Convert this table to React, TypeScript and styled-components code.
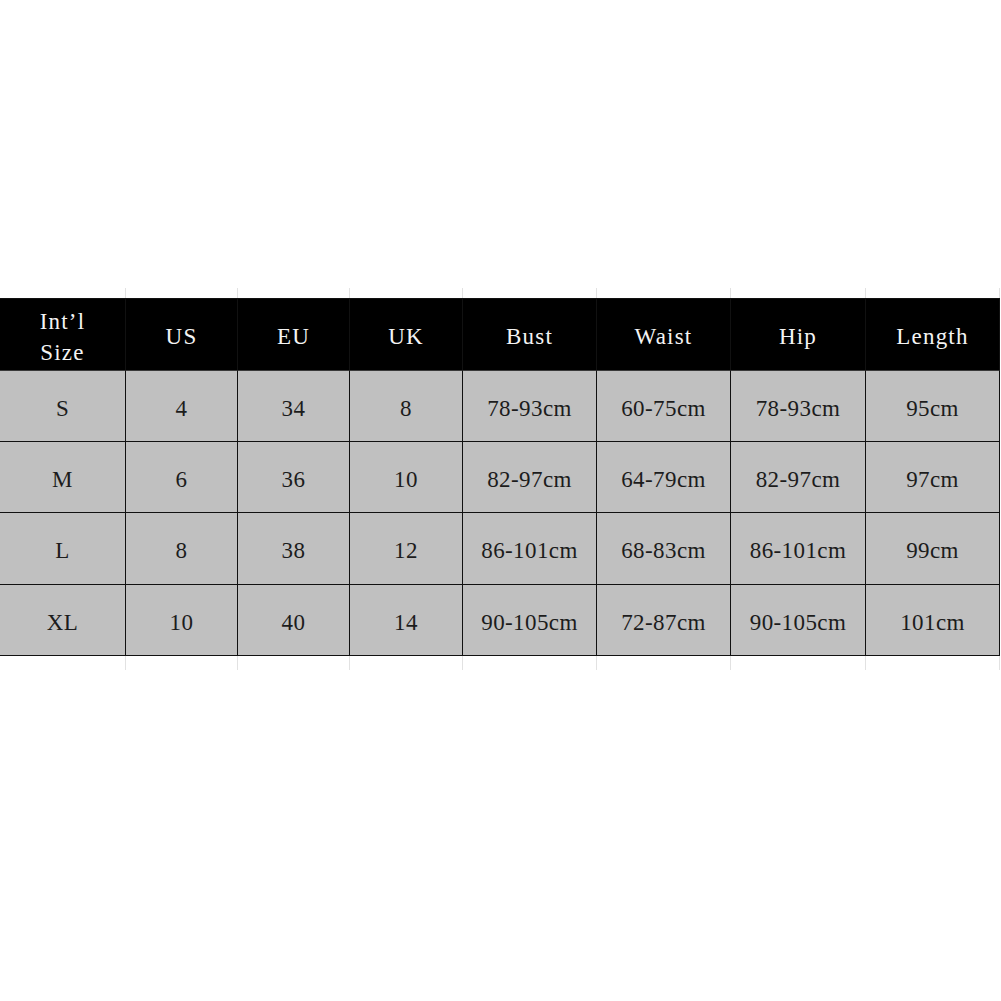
import React from "react";
import styled, { createGlobalStyle } from "styled-components";

const GlobalStyle = createGlobalStyle`
  html, body {
    margin: 0;
    padding: 0;
    background: #fff;
  }
`;

const columns = "126px 112px 112px 113px 134px 134px 135px 134px";

const headers = ["Int’l\nSize", "US", "EU", "UK", "Bust", "Waist", "Hip", "Length"];

const sizeRows = [
  ["S", "4", "34", "8", "78-93cm", "60-75cm", "78-93cm", "95cm"],
  ["M", "6", "36", "10", "82-97cm", "64-79cm", "82-97cm", "97cm"],
  ["L", "8", "38", "12", "86-101cm", "68-83cm", "86-101cm", "99cm"],
  ["XL", "10", "40", "14", "90-105cm", "72-87cm", "90-105cm", "101cm"],
];

const Page = styled.div`
  width: 1000px;
  padding-top: 288px;
`;

const TickStrip = styled.div<{ $height: number }>`
  display: grid;
  grid-template-columns: ${columns};
  height: ${(p) => p.$height}px;
`;

const Tick = styled.div`
  border-right: 1px solid #e2e2e2;
`;

const Table = styled.div`
  display: grid;
  grid-template-columns: ${columns};
  grid-template-rows: 72px 71px 71px 72px 71px;
  border-top: 1px solid #111;
`;

const Cell = styled.div<{ $head?: boolean }>`
  display: flex;
  align-items: center;
  justify-content: center;
  text-align: center;
  white-space: pre-line;
  box-sizing: border-box;
  border-right: 1px solid #111;
  border-bottom: 1px solid ${(p) => (p.$head ? "#3a3a3a" : "#111")};
  background: ${(p) => (p.$head ? "#000" : "#c0c0c0")};
  color: ${(p) => (p.$head ? "#f4f4f4" : "#1c1c1c")};
  font-family: "Liberation Serif", "Times New Roman", serif;
  font-size: 23px;
  line-height: 31px;
  letter-spacing: ${(p) => (p.$head ? 1.2 : 0.4)}px;
  padding-top: 4px;
`;

export default function App() {
  return (
    <Page>
      <GlobalStyle />
      <TickStrip $height={10}>
        {headers.map((h) => (
          <Tick key={h} />
        ))}
      </TickStrip>
      <Table>
        {headers.map((h) => (
          <Cell $head key={h}>
            {h}
          </Cell>
        ))}
        {sizeRows.map((row) =>
          row.map((v, i) => <Cell key={row[0] + i}>{v}</Cell>)
        )}
      </Table>
      <TickStrip $height={14}>
        {headers.map((h) => (
          <Tick key={h} />
        ))}
      </TickStrip>
    </Page>
  );
}
